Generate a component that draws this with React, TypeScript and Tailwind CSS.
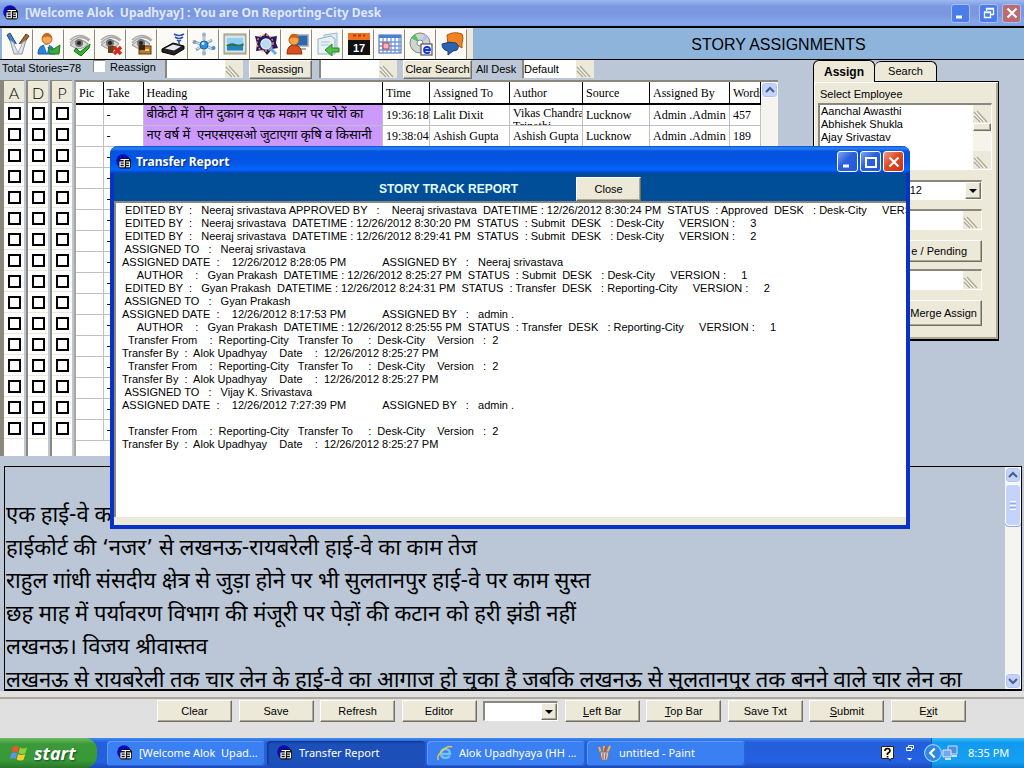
import React from "react";

const raised =
  "border border-t-white border-l-white border-r-[#716f64] border-b-[#716f64] shadow-[inset_-1px_-1px_0_#aca899] bg-[#ece9d8]";
const sunken =
  "border-t-2 border-l-2 border-t-[#8a887c] border-l-[#8a887c] border-r border-b border-r-white border-b-white";

function AppIcon() {
  return (
    <svg viewBox="0 0 16 16" className="size-4 shrink-0" aria-hidden="true">
      <circle cx="7" cy="7" r="6.800" fill="#0a0ac0" />
      <path d="M3.500 5.500L5 4h8l2 2v7l-1.500 1.500H4L2.500 13z" fill="#111" />
      <path d="M4.500 5.500h8.500M3.500 8h5M3.500 10.300h5M3.500 12.700h5M4 8v5M8.300 5.500V13M10 8h3.500v4.700H10M10 10.300h3.500" fill="none" stroke="#fff" strokeWidth="1.100" />
    </svg>
  );
}

function Grip() {
  return (
    <svg viewBox="0 0 18 18" className="size-[18px] shrink-0 bg-[#ece9d8]" aria-hidden="true">
      <path d="M1 7l9 10M1 11l6 6M4 6l10 11" stroke="#aca899" strokeWidth="1.300" fill="none" />
      <path d="M1 8.500l8 8.500M2.500 6.500l9 10" stroke="#fff" strokeWidth=".7" fill="none" />
    </svg>
  );
}

function GripField({ label, width, value }: { label: string; width: string; value?: string }) {
  return (
    <span className={`flex h-[18px] shrink-0 overflow-hidden bg-[#ece9d8] ${width}`}>
      <input
        aria-label={label}
        defaultValue={value}
        className="h-full min-w-0 flex-1 border-l-2 border-[#8a887c] bg-white outline-none"
      />
      <Grip />
    </span>
  );
}

function Eye() {
  return (
    <g>
      <path d="M2 8Q12-1 22 8M2 11Q12 1 21 9M4 14Q12 4 20 12" fill="none" stroke="#aaa" strokeWidth="1.600" />
      <path d="M2 13q9-9 18-1-8 9-18 1" fill="#d8d8d8" stroke="#999" />
      <circle cx="11" cy="11" r="4" fill="#777" />
      <circle cx="11" cy="11" r="2" fill="#222" />
    </g>
  );
}

const tools: { name: string; art: React.ReactNode }[] = [
  {
    name: "Edit",
    art: (
      <g>
        <path d="M1 3l3-2 7 12-3 3z" fill="#3f7fc8" stroke="#294b78" />
        <path d="M20 2l3 2-7 10-3-2z" fill="#9a6a3c" stroke="#5f3c1c" />
        <path d="M4 8l4 14h8l4-14-4 3-4 6-4-6z" fill="#dfe4ea" stroke="#8b95a3" />
        <path d="M8 12l4 9 4-9" fill="#fff" stroke="#a4adba" />
      </g>
    ),
  },
  {
    name: "Assign user",
    art: (
      <g>
        <path d="M1 22q0-9 8-9t9 9z" fill="#2a83d6" stroke="#17599c" />
        <path d="M7 13h5l-2 8z" fill="#fff" />
        <circle cx="10" cy="7" r="5" fill="#f6a85a" stroke="#b86b25" />
        <path d="M5 6q1-5 5-5t5 5q-5-3-10 0" fill="#c8671a" />
        <path d="M11 15l4 3 8-5-1 9h-9z" fill="#3cae3c" stroke="#1d7a20" />
      </g>
    ),
  },
  {
    name: "Approve",
    art: (
      <g>
        <Eye />
        <path d="M8 16l4 4 10-8-1 4-8 8-7-5z" fill="#32b432" stroke="#147018" />
      </g>
    ),
  },
  {
    name: "Reject",
    art: (
      <g>
        <Eye />
        <path d="M9 14h7l-2 7H9z" fill="#68401c" />
        <path d="M15 15l7 7M22 15l-7 7" stroke="#d22a1c" strokeWidth="3.400" />
      </g>
    ),
  },
  {
    name: "Hold",
    art: (
      <g>
        <Eye />
        <rect x="9" y="14" width="12" height="8" fill="#bb7a2e" stroke="#5b3911" />
        <rect x="9" y="13" width="6" height="5" fill="#3c2612" />
        <rect x="15" y="17" width="4" height="2" fill="#f5cf6a" />
      </g>
    ),
  },
  {
    name: "Modem",
    art: (
      <g>
        <path d="M1 17l11-6 11 3v3l-10 6-12-3z" fill="#222" stroke="#000" />
        <path d="M4 16.500l8-4 8 2-7 4z" fill="#e7eaee" />
        <path d="M13 2q5 3 10 0M14 5q4 3 8 0M16 8q2 2 4 0M18 9v4" fill="none" stroke="#2a55b0" strokeWidth="1.600" />
      </g>
    ),
  },
  {
    name: "Network",
    art: (
      <g>
        <path d="M12 2v20M3 10l18 7M4 18l16-10" stroke="#8fa7bd" strokeWidth="2.800" />
        <path d="M12 3v18M4 10.500l16 6M5 17l14-9" stroke="#e0ebf4" strokeWidth="1" />
        <circle cx="12" cy="13" r="4" fill="#2f8fe2" stroke="#1763a8" />
        <circle cx="11" cy="11.500" r="1.500" fill="#cfe8ff" />
        <circle cx="12" cy="2.500" r="2" fill="#9eb4c6" />
        <circle cx="12" cy="21.500" r="2" fill="#9eb4c6" />
        <circle cx="2.500" cy="10" r="2" fill="#7d9fbd" />
        <circle cx="21.500" cy="16" r="2" fill="#3e92dc" />
      </g>
    ),
  },
  {
    name: "Picture",
    art: (
      <g>
        <rect x="1" y="2" width="22" height="20" fill="#c5c4b6" stroke="#939384" />
        <rect x="3" y="5" width="18" height="14" fill="#8fd0f4" stroke="#fff" />
        <path d="M3.500 13q5-3 9-1t8-1v3h-17z" fill="#2d7145" />
        <rect x="4" y="14" width="16" height="4.500" fill="#2583bb" />
      </g>
    ),
  },
  {
    name: "Find",
    art: (
      <g>
        <path d="M1 4l6 1 5-4 4 4 7-1-1 7 2 5-6 1-5 6-4-5-7 1 1-7z" fill="#23186b" />
        <circle cx="11" cy="11" r="8" fill="none" stroke="#e0953d" strokeWidth="1.500" strokeDasharray="2 1.500" />
        <circle cx="12" cy="12" r="5" fill="#b7dcf2" stroke="#dfe6ee" strokeWidth="1.500" />
        <path d="M16 16l6 6" stroke="#6ca7e8" strokeWidth="3" />
      </g>
    ),
  },
  {
    name: "User computer",
    art: (
      <g>
        <rect x="11" y="3" width="12" height="11" fill="#2868b4" stroke="#9fa6af" strokeWidth="1.500" />
        <path d="M13 16h8v2h-8z" fill="#aaa" />
        <path d="M2 22q0-9 7-9t8 9z" fill="#d8501c" stroke="#8f2e0b" />
        <circle cx="9" cy="8" r="5" fill="#f6a34b" stroke="#a85a16" />
        <path d="M4 7q1-6 6-5 4 0 4 5-5-3-10 0" fill="#c86318" />
      </g>
    ),
  },
  {
    name: "Transfer",
    art: (
      <g>
        <path d="M8 3l13-2v16H8z" fill="#dcebf4" stroke="#9fb9ca" />
        <path d="M2 7l13-3 4 3v15H2z" fill="#e8f1f6" stroke="#8fb0c4" />
        <path d="M5 10h9M5 13h8" stroke="#a9c4d3" />
        <path d="M23 16h-7v-4l-7 6 7 6v-4h7z" fill="#54bf4c" stroke="#28862a" />
      </g>
    ),
  },
  {
    name: "Calendar day",
    art: (
      <g>
        <path d="M1 1h22v7H1z" fill="#f07022" />
        <path d="M1 8h22v15H1z" fill="#111" />
        <text x="12" y="20" textAnchor="middle" fontSize="11" fontWeight="700" fill="#fff" fontFamily="Liberation Sans, sans-serif">
          17
        </text>
        <path d="M6 3.500h3M11 3.500h3M16 3.500h2" stroke="#b13d08" strokeWidth="2" />
      </g>
    ),
  },
  {
    name: "Calendar month",
    art: (
      <g>
        <rect x="1" y="3" width="22" height="18" fill="#fff" stroke="#3b64b5" />
        <path d="M1 3h22v3H1z" fill="#4b7fd4" />
        <path d="M1 10h22M1 14h22M1 18h22M5 6v15M9 6v15M13 6v15M17 6v15M21 6v15" stroke="#6d97dc" strokeWidth="1.300" />
        <rect x="5" y="11" width="6" height="6" fill="#f3b6bb" stroke="#c23a46" />
      </g>
    ),
  },
  {
    name: "Web disc",
    art: (
      <g>
        <circle cx="11" cy="11" r="10" fill="#cfd6cb" stroke="#7e877a" />
        <path d="M11 11L2 6l4-4zM11 11l9 6-4 4z" fill="#57c26b" />
        <path d="M11 11l5-9 4 4z" fill="#b9c0ef" />
        <circle cx="11" cy="11" r="3" fill="#fff" stroke="#888" />
        <rect x="12" y="12" width="11" height="11" fill="#fff" stroke="#334" />
        <path d="M15 18h6q0-3-3-3t-3 3 3 3q2 0 3-1" fill="none" stroke="#1438d8" strokeWidth="1.800" />
      </g>
    ),
  },
  {
    name: "Messages",
    art: (
      <g>
        <path d="M7 3q7-4 15-1 2 4 0 9v5l-5-3H8z" fill="#f08321" stroke="#b75209" />
        <path d="M2 12q7-3 14-1 4 3 1 7l-4 1-5 4v-4q-6-1-6-7" fill="#2c62ae" stroke="#173f7a" />
      </g>
    ),
  },
];

type Glyph = "min" | "restore" | "max" | "close";

function WindowButton({ kind, faded, big }: { kind: Glyph; faded?: boolean; big?: boolean }) {
  const color =
    kind === "close"
      ? faded
        ? "bg-[#bd6a72]"
        : "bg-[linear-gradient(135deg,#f09a80,#e04a24_45%,#c8320f)]"
      : faded
        ? "bg-[#4a7cea]"
        : "bg-[linear-gradient(135deg,#7fa5f5,#2a5fdc_45%,#2458d8)]";
  return (
    <button
      aria-label={kind}
      className={`flex items-center justify-center rounded-[3px] border ${faded ? "border-[#a9c0f4]" : "border-white"} ${big ? "size-[21px]" : "size-[19px]"} ${color}`}
    >
      <svg viewBox="0 0 14 14" className="size-3.5" fill="none" stroke="#fff" aria-hidden="true">
        {kind === "min" && <path d="M2 11h6" strokeWidth="3" />}
        {kind === "max" && <path d="M2 12V3h10v9zM1.200 3h11.600" strokeWidth="2" />}
        {kind === "restore" && <path d="M4.500 5V2.500h7v6H9M2.500 6h6v5.500h-6zM2 6.500h7M4 3h8" strokeWidth="1.300" />}
        {kind === "close" && <path d="M2.500 2.500l9 9M11.500 2.500l-9 9" strokeWidth="2.200" />}
      </svg>
    </button>
  );
}

function ScrollArrow({ down }: { down?: boolean }) {
  return (
    <button
      aria-label={down ? "Scroll down" : "Scroll up"}
      className="flex h-4 w-full shrink-0 items-center justify-center rounded-sm border border-white bg-[#c3d3fd] shadow-[inset_0_0_0_1px_#b0c4f8]"
    >
      <svg viewBox="0 0 10 8" className="h-2 w-2.5" fill="none" stroke="#4d6185" strokeWidth="2.200" aria-hidden="true">
        <path d={down ? "M1 2l4 4 4-4" : "M1 6l4-4 4 4"} />
      </svg>
    </button>
  );
}

const marks = Array.from({ length: 16 }, (_, i) => i);

function MarkColumn({ letter }: { letter: string }) {
  return (
    <div className="mr-0.5 w-[22px] shrink-0 border-t border-l-2 border-[#8a887c] bg-white">
      <div className="flex h-[22px] items-center justify-center border-b border-[#aca899] bg-[#ece9d8] pt-0.5 font-['Lato',sans-serif] text-base font-light">
        {letter}
      </div>
      {marks.map((i) => (
        <div key={i} className="flex h-[21px] items-center justify-center border-b border-[#ece9d8]">
          <input
            type="checkbox"
            aria-label={`${letter} ${i + 1}`}
            className="size-[13px] appearance-none border-2 border-black bg-white"
          />
        </div>
      ))}
    </div>
  );
}

const stories = [
  ["", "-", "बीकेटी में  तीन दुकान व एक मकान पर चोरों का", "19:36:18", "Lalit Dixit", "Vikas Chandra\nTripathi", "Lucknow", "Admin .Admin", "457"],
  ["", "-", "नए वर्ष में  एनएसएसओ जुटाएगा कृषि व किसानी", "19:38:04", "Ashish Gupta", "Ashish Gupta", "Lucknow", "Admin .Admin", "189"],
  ...Array.from({ length: 14 }, () => ["", "-", "", "", "", "", "", "", ""]),
];

const headings = ["Pic", "Take", "Heading", "Time", "Assigned To", "Author", "Source", "Assigned By", "Words"];
const widths = ["w-[27px]", "w-10", "", "w-[47px]", "w-20", "w-[73px]", "w-[67px]", "w-20", "w-[31px]"];

function StoryTable() {
  return (
    <div className="flex min-w-0 flex-1 border-t-2 border-l-2 border-t-[#8a887c] border-l-[#aca899] bg-white">
      <div className="min-w-0 flex-1">
        <table className="w-full table-fixed border-collapse font-['Liberation_Serif',serif] text-xs">
          <thead>
            <tr className="h-[22px]">
              {headings.map((h, i) => (
                <th key={h} className={`overflow-hidden border-r border-b-2 border-black py-0 pr-0 pl-[3px] text-left leading-[14px] font-normal whitespace-nowrap ${widths[i]}`}>
                  {h}
                </th>
              ))}
            </tr>
          </thead>
          <tbody>
            {stories.map((row, r) => (
              <tr key={r} className="h-[21px]">
                {row.map((cell, c) => (
                  <td
                    key={c}
                    className={`border-r border-b border-[#c0c0c0] py-0 pr-0 pl-[3px] ${c === 2 && r < 2 ? "bg-[#cc99ff] font-['Noto_Sans_Devanagari','Lohit_Devanagari','Noto_Sans',sans-serif] text-[13px]" : ""}`}
                  >
                    <div className={`h-5 overflow-hidden whitespace-pre ${c === 5 && r === 0 ? "pt-0.5 leading-[13px]" : "leading-5"}`}>{cell}</div>
                  </td>
                ))}
              </tr>
            ))}
          </tbody>
        </table>
      </div>
      <div className="w-[17px] shrink-0 bg-[#f5f4ee]">
        <ScrollArrow />
      </div>
    </div>
  );
}

function AssignPanel() {
  return (
    <div className="mr-[25px] ml-[35px] w-[186px] shrink-0 self-start">
      <div className="-mt-5 flex items-end" role="tablist">
        <button role="tab" aria-selected="true" className="relative -mb-px h-[22px] w-[62px] rounded-t-md border border-b-0 border-black bg-[#ece9d8] text-xs font-bold">
          Assign
        </button>
        <button role="tab" aria-selected="false" className="h-5 w-[62px] rounded-t-md border border-b-0 border-l-0 border-black bg-[#ece9d8]">
          Search
        </button>
      </div>
      <div className="flex h-[260px] flex-col border border-b-2 border-black bg-[#ece9d8] pl-1 shadow-[inset_1px_1px_0_#fff,inset_-2px_-2px_0_#aca899]">
        <label htmlFor="employees" className="pt-1 pl-0.5 leading-[17px]">
          Select Employee
        </label>
        <div className={`mr-1.5 flex h-[67px] shrink-0 bg-white ${sunken}`}>
          <ul id="employees" className="flex-1 pl-px leading-[13px]">
            <li>Aanchal Awasthi</li>
            <li>Abhishek Shukla</li>
            <li>Ajay Srivastav</li>
          </ul>
          <div className="flex w-[18px] flex-col overflow-hidden bg-[#f5f3ea]">
            <Grip />
            <div className={`h-2 shrink-0 ${raised}`} />
            <div className="flex-1" />
            <Grip />
          </div>
        </div>
        <div className="mt-2.5 mr-4 flex flex-col">
          <div className={`flex h-5 items-center justify-end bg-white ${sunken}`}>
            <span className="pr-[43px]">12</span>
            <button aria-label="Open date list" className={`flex h-full w-4 items-center justify-center ${raised}`}>
              <DropArrow />
            </button>
          </div>
          <div className={`mt-[9px] flex h-[21px] overflow-hidden bg-white ${sunken}`}>
            <input aria-label="Note" className="min-w-0 flex-1 outline-none" />
            <Grip />
          </div>
          <button className={`mt-2.5 h-[22px] pr-3.5 text-right ${raised}`}>e / Pending</button>
          <div className={`mt-[7px] flex h-[21px] overflow-hidden bg-white ${sunken}`}>
            <input aria-label="Merge note" className="min-w-0 flex-1 outline-none" />
            <Grip />
          </div>
          <button className={`mt-2.5 ml-auto h-[26px] w-[76px] pr-1 text-right whitespace-nowrap ${raised}`}>Merge Assign</button>
        </div>
      </div>
    </div>
  );
}

function DropArrow() {
  return (
    <svg viewBox="0 0 8 4" className="h-1 w-2" aria-hidden="true">
      <path d="M0 0h8L4 4z" fill="#000" />
    </svg>
  );
}

const report = [
  " EDITED BY  :   Neeraj srivastava APPROVED BY   :    Neeraj srivastava  DATETIME : 12/26/2012 8:30:24 PM  STATUS  : Approved  DESK   : Desk-City     VERSION",
  " EDITED BY  :   Neeraj srivastava  DATETIME : 12/26/2012 8:30:20 PM  STATUS  : Submit  DESK   : Desk-City     VERSION :     3",
  " EDITED BY  :   Neeraj srivastava  DATETIME : 12/26/2012 8:29:41 PM  STATUS  : Submit  DESK   : Desk-City     VERSION :     2",
  " ASSIGNED TO   :   Neeraj srivastava",
  "ASSIGNED DATE  :    12/26/2012 8:28:05 PM            ASSIGNED BY   :   Neeraj srivastava",
  "     AUTHOR    :   Gyan Prakash  DATETIME : 12/26/2012 8:25:27 PM  STATUS  : Submit  DESK   : Desk-City     VERSION :     1",
  " EDITED BY  :   Gyan Prakash  DATETIME : 12/26/2012 8:24:31 PM  STATUS  : Transfer  DESK   : Reporting-City     VERSION :     2",
  " ASSIGNED TO   :   Gyan Prakash",
  "ASSIGNED DATE  :    12/26/2012 8:17:53 PM            ASSIGNED BY   :   admin .",
  "     AUTHOR    :   Gyan Prakash  DATETIME : 12/26/2012 8:25:55 PM  STATUS  : Transfer  DESK   : Reporting-City     VERSION :     1",
  "  Transfer From    :  Reporting-City   Transfer To     :  Desk-City    Version   :  2",
  "Transfer By  :  Alok Upadhyay    Date    :  12/26/2012 8:25:27 PM",
  "  Transfer From    :  Reporting-City   Transfer To     :  Desk-City    Version   :  2",
  "Transfer By  :  Alok Upadhyay    Date    :  12/26/2012 8:25:27 PM",
  " ASSIGNED TO   :   Vijay K. Srivastava",
  "ASSIGNED DATE  :    12/26/2012 7:27:39 PM            ASSIGNED BY   :   admin .",
  "",
  "  Transfer From    :  Reporting-City   Transfer To     :  Desk-City    Version   :  2",
  "Transfer By  :  Alok Upadhyay    Date    :  12/26/2012 8:25:27 PM",
];

function ReportWindow() {
  return (
    <section
      aria-label="Transfer Report"
      className="absolute top-[146px] left-[110px] flex h-[383px] w-[800px] flex-col rounded-t-lg border-r-4 border-b-4 border-l-4 border-[#0831c8] bg-[#ece9d8]"
    >
      <header className="-mx-1 flex h-[27px] shrink-0 items-center gap-0.5 rounded-t-lg bg-[linear-gradient(#0a4fd0,#2a86fb_8%,#0553df_20%,#0355e6_60%,#0366fb_88%,#0440c8)] pt-1 pr-1.5 pl-1.5">
        <AppIcon />
        <h2 className="ml-0.5 flex-1 font-['Noto_Sans',sans-serif] text-xs font-bold text-white [text-shadow:1px_1px_1px_#0a2a80]">
          Transfer Report
        </h2>
        <WindowButton kind="min" big />
        <WindowButton kind="max" big />
        <WindowButton kind="close" big />
      </header>
      <div className="flex h-7 shrink-0 items-center justify-center gap-[58px] bg-[#004e98] pt-1">
        <h3 className="text-xs font-bold text-[#e4fdff]">STORY TRACK REPORT</h3>
        <button className={`h-6 w-[65px] ${raised}`}>Close</button>
      </div>
      <div className="mb-2 min-h-0 flex-1 overflow-hidden border-t-2 border-l-2 border-[#8a887c] bg-white pt-px pl-1.5">
        {report.map((line, i) => (
          <p key={i} className="h-[13px] leading-[13px] whitespace-pre">
            {line}
          </p>
        ))}
      </div>
    </section>
  );
}

const article = [
  "एक हाई-वे का काम",
  "हाईकोर्ट की ‘नजर’ से लखनऊ-रायबरेली हाई-वे का काम तेज",
  "राहुल गांधी संसदीय क्षेत्र से जुड़ा होने पर भी सुलतानपुर हाई-वे पर काम सुस्त",
  "छह माह में पर्यावरण विभाग की मंजूरी पर पेड़ों की कटान को हरी झंडी नहीं",
  "लखनऊ। विजय श्रीवास्तव",
  "लखनऊ से रायबरेली तक चार लेन के हाई-वे का आगाज हो चुका है जबकि लखनऊ से सुलतानपुर तक बनने वाले चार लेन का",
];

function Command({ children }: { children: React.ReactNode }) {
  return <button className={`h-[22px] w-[75px] ${raised}`}>{children}</button>;
}

function Task({ icon, label, active }: { icon: React.ReactNode; label: string; active?: boolean }) {
  return (
    <button
      className={`flex h-[25px] w-[158px] items-center gap-1.5 rounded-sm pl-2.5 text-left text-white ${active ? "bg-[#1c4fb8] shadow-[inset_1px_1px_2px_#0f2f80]" : "bg-[#3a80f3] shadow-[inset_1px_1px_0_#5c9bfa,inset_-1px_-1px_0_#2a62cf]"}`}
    >
      {icon}
      <span className="truncate whitespace-pre">{label}</span>
    </button>
  );
}

export default function App() {
  return (
    <div className="relative flex min-h-screen w-full flex-col overflow-hidden bg-[#bbc7d6] font-['Liberation_Sans',Arial,sans-serif] text-[11px] text-black">
      <header className="flex h-[27px] shrink-0 items-center gap-1 border-b border-black bg-[linear-gradient(#9db9f0,#7b98e2_25%,#7a96df_55%,#86a6ea_85%,#7f9fe6)] pr-[3px] pl-[3px]">
        <AppIcon />
        <h1 className="ml-0.5 flex-1 font-['Noto_Sans',sans-serif] text-xs font-bold whitespace-pre text-[#dfe9fc]">
          {"[Welcome Alok  Upadhyay] : You are On Reporting-City Desk"}
        </h1>
        <WindowButton kind="min" faded />
        <span className="pl-px" />
        <WindowButton kind="restore" faded />
        <WindowButton kind="close" faded />
      </header>

      <div className="flex h-[33px] shrink-0 items-center border-t border-b border-black bg-[#8fb4dc] pl-0.5">
        <nav className="flex h-full items-center bg-[#ece9d8] pr-1.5">
          {tools.map((t) => (
            <button
              key={t.name}
              aria-label={t.name}
              className="flex h-[30px] w-[31px] items-center justify-center border-t border-r border-l border-t-white border-r-[#8a887c] border-l-white bg-[#fbfaf5]"
            >
              <svg viewBox="0 0 24 24" className="size-6" aria-hidden="true">
                {t.art}
              </svg>
            </button>
          ))}
        </nav>
        <h2 className="flex-1 pt-0.5 pl-[60px] text-center text-base font-medium">STORY ASSIGNMENTS</h2>
      </div>

      <div className="flex h-5 shrink-0 items-start pl-0.5">
        <span className="w-[91px] leading-4">Total Stories=78</span>
        <input id="reassign" type="checkbox" className="size-3 appearance-none border-t border-l border-[#8a887c] bg-white" />
        <label htmlFor="reassign" className="w-[60px] pl-[5px] leading-[14px]">
          Reassign
        </label>
        <GripField label="Reassign to" width="w-[78px]" />
        <button className={`ml-1.5 h-[19px] w-[63px] ${raised}`}>Reassign</button>
        <span className="w-[7px]" />
        <GripField label="Search text" width="w-[78px]" />
        <span className="w-1.5" />
        <button className={`h-[19px] w-[69px] whitespace-nowrap ${raised}`}>Clear Search</button>
        <label className="flex pl-1 leading-[18px]">
          <span className="w-[46px]">All Desk</span>
          <GripField label="All Desk" width="w-[72px]" value="Default" />
        </label>
      </div>

      <div className="flex h-[376px] shrink-0 border-l-2 border-[#8a887c]">
        <MarkColumn letter="A" />
        <MarkColumn letter="D" />
        <MarkColumn letter="P" />
        <StoryTable />
        <AssignPanel />
      </div>

      <div className="mt-2.5 mr-0.5 ml-1 flex h-[225px] shrink-0 overflow-hidden border border-b-2 border-black">
        <div className="min-w-0 flex-1 pt-[33px] pl-px font-['Noto_Sans_Devanagari','Lohit_Devanagari','Noto_Sans',sans-serif] text-[22px] leading-[33px] whitespace-nowrap">
          {article.map((line) => (
            <p key={line} className="h-[33px]">
              {line}
            </p>
          ))}
        </div>
        <div className="flex w-4 shrink-0 flex-col bg-[#f5f5f0]">
          <ScrollArrow />
          <div className="mt-px flex h-[42px] flex-col items-center justify-center gap-px rounded-sm border border-white bg-[#c3d3fd] shadow-[0_1px_0_#8fa9dc]">
            <span className="h-px w-1.5 bg-white" />
            <span className="h-px w-1.5 bg-[#8cb0f8]" />
            <span className="h-px w-1.5 bg-white" />
            <span className="h-px w-1.5 bg-[#8cb0f8]" />
            <span className="h-px w-1.5 bg-white" />
          </div>
          <div className="flex-1" />
          <ScrollArrow down />
        </div>
      </div>

      <div className="flex-1 bg-[#e0e0e0] pt-1.5">
        <div className="border-t-2 border-[#aca899] pt-px pr-[58px] pl-[157px]">
          <div className="flex items-center justify-between">
            <Command>Clear</Command>
            <Command>Save</Command>
            <Command>Refresh</Command>
            <Command>Editor</Command>
            <div className={`flex h-5 w-[75px] bg-white ${sunken}`}>
              <input aria-label="Section" className="min-w-0 flex-1 outline-none" />
              <button aria-label="Open section list" className={`flex w-4 items-center justify-center ${raised}`}>
                <DropArrow />
              </button>
            </div>
            <Command><u>L</u>eft Bar</Command>
            <Command><u>T</u>op Bar</Command>
            <Command>Save Txt</Command>
            <Command><u>S</u>ubmit</Command>
            <Command>E<u>x</u>it</Command>
          </div>
        </div>
      </div>

      <footer className="flex h-[30px] shrink-0 items-center bg-[linear-gradient(#3f8cf3,#245edb_15%,#2460e0_80%,#1b4ab8)] font-['Noto_Sans',sans-serif]">
        <button className="flex h-full w-[97px] items-center gap-1.5 rounded-r-xl bg-[linear-gradient(#6cbb62,#3a9a38_20%,#379a36_75%,#2a7629)] pl-2.5 font-['Open_Sans',sans-serif] text-lg leading-none font-bold text-white italic [text-shadow:1px_1px_2px_#1a4a1a]">
          <svg viewBox="0 0 18 18" className="size-[18px]" aria-hidden="true">
            <path d="M3 3q3-2 6 0L7.500 8.500q-3-2-6 0z" fill="#f0562b" />
            <path d="M10 3.500q3 2 7 0L15.500 9q-3 2-7 0z" fill="#8ccf3c" />
            <path d="M1.200 9.500q3-2 6 0L5.800 15q-3-2-6 0z" fill="#5b93f2" />
            <path d="M8.200 10q3 2 7 0L13.700 15.500q-3 2-7 0z" fill="#fccb2c" />
          </svg>
          start
        </button>
        <nav className="flex gap-0.5 pl-2.5">
          <Task icon={<AppIcon />} label="[Welcome Alok  Upad..." />
          <Task icon={<AppIcon />} label="Transfer Report" active />
          <Task
            icon={
              <svg viewBox="0 0 16 16" className="size-4 shrink-0" aria-hidden="true">
                <path d="M4 9h9q0-5-4.500-5T4 8.500 8.500 13q3 0 4.200-2" fill="none" stroke="#6cc5f6" strokeWidth="2.400" />
                <path d="M1.500 15Q-1 12 5 6t10-4" fill="none" stroke="#f4c542" strokeWidth="1.500" />
              </svg>
            }
            label="Alok Upadhyaya (HH ..."
          />
          <Task
            icon={
              <svg viewBox="0 0 16 16" className="size-4 shrink-0" aria-hidden="true">
                <path d="M4 8L2 2M7 8V1M10 8l3-7" stroke="#f2b632" strokeWidth="2" />
                <path d="M7 8l2-7" stroke="#d8402c" strokeWidth="1.500" />
                <path d="M3 7h9l-1.500 8h-6z" fill="#c8cdd4" stroke="#777" />
                <path d="M6 8v6M9 8l-.5 6" stroke="#c04a28" />
              </svg>
            }
            label="untitled - Paint"
          />
        </nav>
        <div className="ml-auto flex items-center gap-2.5 pr-4">
          <svg viewBox="0 0 14 15" className="h-[15px] w-3.5" aria-hidden="true">
            <path d="M.5.500h12v12H10L9 14.500 8 12.500H.5z" fill="#ffffe1" stroke="#222" />
            <path d="M4 5q0-2.500 2.500-2.500T9 5q0 1-2.500 2.500V9M6.500 10v1.500" fill="none" stroke="#000" strokeWidth="1.700" />
          </svg>
          <svg viewBox="0 0 10 18" className="h-[18px] w-2.5" aria-hidden="true">
            <path d="M3.500 3V1.500h5v3H7M1.500 3.500h5v3h-5z" fill="none" stroke="#fff" />
            <path d="M2 14h5L4.500 16.500z" fill="#fff" />
          </svg>
        </div>
        <div className="flex h-full w-[93px] items-center border-l border-[#0f5fc0] bg-[linear-gradient(#3cc0f8,#129aee_15%,#14a0f2_80%,#0c7dd0)] text-white">
          <svg viewBox="0 0 16 16" className="-ml-2 size-[18px]" aria-hidden="true">
            <circle cx="8" cy="8" r="7.500" fill="#2f86e8" stroke="#9fd2fb" />
            <path d="M9.500 4l-4 4 4 4" fill="none" stroke="#fff" strokeWidth="1.900" />
          </svg>
          <svg viewBox="0 0 16 16" className="size-4" aria-hidden="true">
            <path d="M6 1h9v8H6z" fill="#4f8fe0" stroke="#cfe0f5" />
            <path d="M1 5h8v7H1z" fill="#6fa8ee" stroke="#e0ebf8" />
            <path d="M3 14h6M10 11h5" stroke="#cfe0f5" strokeWidth="2" />
          </svg>
          <span className="pl-2.5">8:35 PM</span>
        </div>
      </footer>

      <ReportWindow />
    </div>
  );
}
